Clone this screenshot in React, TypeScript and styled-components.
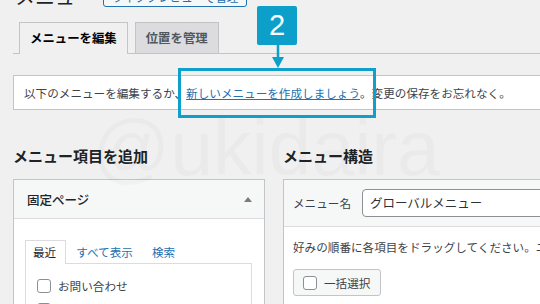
import React from "react";
import styled, { createGlobalStyle } from "styled-components";

const GlobalStyle = createGlobalStyle`
  html, body {
    margin: 0;
    padding: 0;
    background: #f0f0f1;
    overflow: hidden;
  }
  body {
    width: 540px;
    height: 304px;
    font-family: "Noto Sans CJK JP", "Noto Sans", sans-serif;
    color: #3c434a;
  }
`;

const Page = styled.div`
  position: relative;
  width: 660px;
  height: 304px;
  padding-left: 13px;
  box-sizing: border-box;
  overflow: hidden;
`;

const TitleRow = styled.div`
  display: flex;
  align-items: flex-end;
  gap: 8px;
  height: 26px;
  margin-top: -19px;
  padding-left: 2px;
`;

const Title = styled.h1`
  margin: 0 0 -3px;
  font-size: 20px;
  font-weight: 400;
  line-height: 26px;
  color: #1d2327;
`;

const OutlineButton = styled.span`
  display: inline-flex;
  align-items: center;
  justify-content: center;
  width: 144px;
  height: 26px;
  box-sizing: border-box;
  padding-top: 5px;
  border: 1px solid #2271b1;
  border-radius: 3px;
  background: #f6f7f7;
  color: #2271b1;
  font-size: 11.6px;
  white-space: nowrap;
`;

const NavTabs = styled.div`
  display: flex;
  align-items: flex-end;
  gap: 7px;
  margin-top: 15px;
  padding-left: 6px;
  height: 31px;
  border-bottom: 1px solid #c3c4c7;
`;

const NavTab = styled.div<{ $active?: boolean }>`
  height: ${(p) => (p.$active ? "32px" : "31px")};
  margin-bottom: ${(p) => (p.$active ? "-1px" : "0")};
  box-sizing: border-box;
  padding: 0 10px;
  border: 1px solid #c3c4c7;
  border-bottom: none;
  background: ${(p) => (p.$active ? "#f0f0f1" : "#dcdcde")};
  color: ${(p) => (p.$active ? "#000" : "#50575e")};
  font-size: 12.4px;
  font-weight: 600;
  line-height: 30px;
  white-space: nowrap;
`;

const Notice = styled.div`
  display: flex;
  align-items: center;
  height: 35px;
  margin-top: 21px;
  box-sizing: border-box;
  padding: 0 10px;
  border: 1px solid #c3c4c7;
  background: #fff;
  font-size: 11.6px;
  white-space: nowrap;
  color: #3c434a;
`;

const Link = styled.a`
  color: #2271b1;
  text-decoration: underline;
`;

const Columns = styled.div`
  display: grid;
  grid-template-columns: 252px 1fr;
  column-gap: 18px;
  margin-top: 36px;
`;

const Column = styled.div`
  display: flex;
  flex-direction: column;
`;

const Heading = styled.h2`
  margin: 0 0 13px;
  font-size: 15px;
  font-weight: 700;
  line-height: 20px;
  color: #1d2327;
  white-space: nowrap;
`;

const Panel = styled.div<{ $open?: boolean }>`
  border: 1px solid #c3c4c7;
  border-right: ${(p) => (p.$open ? "none" : "1px solid #c3c4c7")};
  background: #fff;
  height: 140px;
`;

const AccordionHeader = styled.div`
  display: flex;
  align-items: center;
  justify-content: space-between;
  height: 38px;
  padding: 0 12px 0 13px;
  background: #f6f7f7;
  border-bottom: 1px solid #dcdcde;
  font-size: 12.5px;
  font-weight: 500;
  color: #1d2327;
`;

const UpArrow = styled.span`
  width: 0;
  height: 0;
  border-left: 4px solid transparent;
  border-right: 4px solid transparent;
  border-bottom: 5px solid #787c82;
`;

const AccordionBody = styled.div`
  padding: 21px 12px 0 11px;
`;

const SubTabs = styled.div`
  display: flex;
  align-items: flex-end;
  height: 23px;
`;

const SubTab = styled.span<{ $active?: boolean }>`
  height: ${(p) => (p.$active ? "24px" : "23px")};
  margin-bottom: ${(p) => (p.$active ? "-1px" : "0")};
  box-sizing: border-box;
  padding: ${(p) => (p.$active ? "0 9px 0 7px" : "0 8px 0 9px")};
  border: ${(p) => (p.$active ? "1px solid #dcdcde" : "1px solid transparent")};
  border-bottom: none;
  background: ${(p) => (p.$active ? "#fff" : "transparent")};
  color: ${(p) => (p.$active ? "#1d2327" : "#2271b1")};
  font-size: 11.6px;
  line-height: 22px;
  white-space: nowrap;
`;

const TabPanel = styled.div`
  border: 1px solid #dcdcde;
  padding: 15px 11px 0;
  height: 80px;
`;

const CheckRow = styled.label`
  display: flex;
  align-items: center;
  gap: 7px;
  height: 14px;
  margin-bottom: 10px;
  font-size: 11.6px;
  color: #3c434a;
  white-space: nowrap;
`;

const CheckBox = styled.span`
  flex: none;
  width: 14px;
  height: 14px;
  box-sizing: border-box;
  border: 1px solid #8c8f94;
  border-radius: 3px;
  background: #fff;
`;

const StructureHeader = styled.div`
  display: flex;
  align-items: center;
  gap: 11px;
  height: 46px;
  padding-left: 9px;
  background: #f6f7f7;
  border-bottom: 1px solid #dcdcde;
  font-size: 11.6px;
  color: #3c434a;
  white-space: nowrap;
`;

const NameInput = styled.div`
  width: 320px;
  height: 28px;
  box-sizing: border-box;
  padding-left: 7px;
  border: 1px solid #8c8f94;
  border-radius: 4px;
  background: #fff;
  font-size: 12.5px;
  line-height: 26px;
  color: #2c3338;
`;

const StructureBody = styled.div`
  padding: 10px 9px 0;
`;

const HelpText = styled.p`
  margin: 0 0 12px;
  font-size: 11.6px;
  line-height: 20px;
  color: #3c434a;
  white-space: nowrap;
`;

const BulkButton = styled.span`
  display: inline-flex;
  align-items: center;
  gap: 7px;
  width: 88px;
  height: 27px;
  box-sizing: border-box;
  padding-left: 9px;
  border: 1px solid #c3c4c7;
  border-radius: 3px;
  background: #f6f7f7;
  font-size: 11.6px;
  color: #3c434a;
  white-space: nowrap;
`;

const Watermark = styled.div`
  position: absolute;
  left: 92px;
  top: 110px;
  font-family: "Liberation Sans", Arial, sans-serif;
  font-size: 77px;
  line-height: 77px;
  color: rgba(0, 0, 0, 0.022);
  pointer-events: none;
  white-space: nowrap;
`;

const Highlight = styled.div`
  position: absolute;
  left: 178px;
  top: 68px;
  width: 198px;
  height: 50px;
  box-sizing: border-box;
  border: 3.5px solid #0e9fca;
  pointer-events: none;
`;

const Badge = styled.div`
  position: absolute;
  left: 257px;
  top: 6px;
  width: 40px;
  height: 39px;
  border-radius: 2px;
  background: #0b9fca;
  color: #fff;
  font-family: "Liberation Sans", Arial, sans-serif;
  font-size: 29px;
  line-height: 39px;
  text-align: center;
`;

const Arrow = styled.svg`
  position: absolute;
  left: 270px;
  top: 45px;
`;

export default function App() {
  return (
    <>
      <GlobalStyle />
      <Page>
        <TitleRow>
          <Title>メニュー</Title>
          <OutlineButton>ライブプレビューで管理</OutlineButton>
        </TitleRow>
        <NavTabs>
          <NavTab $active>メニューを編集</NavTab>
          <NavTab>位置を管理</NavTab>
        </NavTabs>
        <Notice>
          以下のメニューを編集するか、
          <Link>新しいメニューを作成しましょう</Link>。変更の保存をお忘れなく。
        </Notice>
        <Columns>
          <Column>
            <Heading>メニュー項目を追加</Heading>
            <Panel>
              <AccordionHeader>
                <span>固定ページ</span>
                <UpArrow />
              </AccordionHeader>
              <AccordionBody>
                <SubTabs>
                  <SubTab $active>最近</SubTab>
                  <SubTab>すべて表示</SubTab>
                  <SubTab>検索</SubTab>
                </SubTabs>
                <TabPanel>
                  <CheckRow>
                    <CheckBox />
                    お問い合わせ
                  </CheckRow>
                  <CheckRow>
                    <CheckBox />
                    サンプルページ
                  </CheckRow>
                </TabPanel>
              </AccordionBody>
            </Panel>
          </Column>
          <Column>
            <Heading>メニュー構造</Heading>
            <Panel $open>
              <StructureHeader>
                <span>メニュー名</span>
                <NameInput>グローバルメニュー</NameInput>
              </StructureHeader>
              <StructureBody>
                <HelpText>好みの順番に各項目をドラッグしてください。ユーザー</HelpText>
                <BulkButton>
                  <CheckBox />
                  一括選択
                </BulkButton>
              </StructureBody>
            </Panel>
          </Column>
        </Columns>
        <Watermark>@ukidaira</Watermark>
        <Highlight />
        <Badge>2</Badge>
        <Arrow width="16" height="24" viewBox="0 0 16 24">
          <line x1="8" y1="0" x2="8" y2="13" stroke="#0b9fca" strokeWidth="2.5" />
          <polygon points="2,12 14,12 8,23" fill="#0b9fca" />
        </Arrow>
      </Page>
    </>
  );
}
